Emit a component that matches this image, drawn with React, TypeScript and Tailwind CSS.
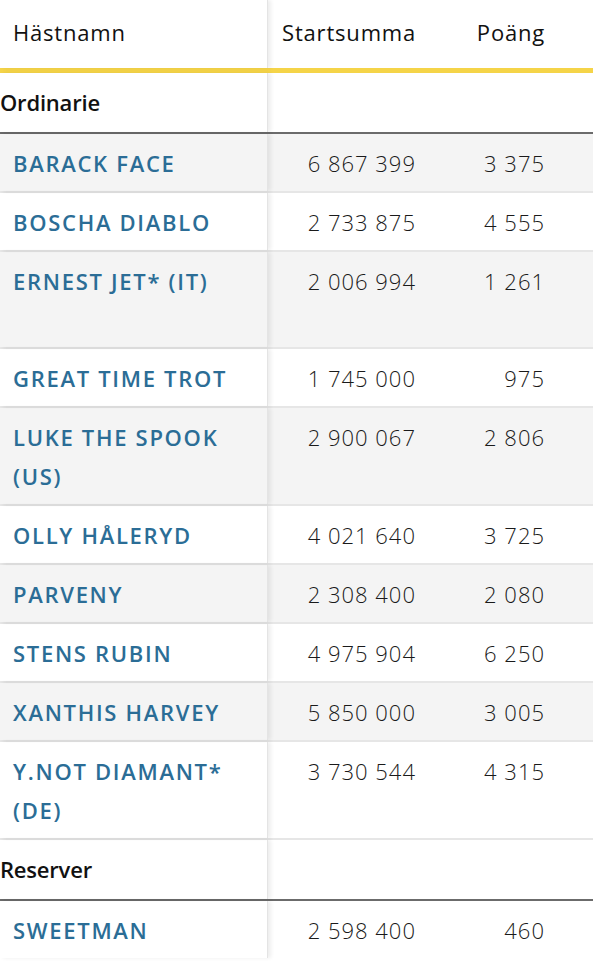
type Horse = { name: string; sum: string; points: string; tall?: boolean };

const ordinarie: Horse[] = [
  { name: "BARACK FACE", sum: "6 867 399", points: "3 375" },
  { name: "BOSCHA DIABLO", sum: "2 733 875", points: "4 555" },
  { name: "ERNEST JET* (IT)", sum: "2 006 994", points: "1 261", tall: true },
  { name: "GREAT TIME TROT", sum: "1 745 000", points: "975" },
  { name: "LUKE THE SPOOK (US)", sum: "2 900 067", points: "2 806" },
  { name: "OLLY HÅLERYD", sum: "4 021 640", points: "3 725" },
  { name: "PARVENY", sum: "2 308 400", points: "2 080" },
  { name: "STENS RUBIN", sum: "4 975 904", points: "6 250" },
  { name: "XANTHIS HARVEY", sum: "5 850 000", points: "3 005" },
  { name: "Y.NOT DIAMANT* (DE)", sum: "3 730 544", points: "4 315" },
];

const reserver: Horse[] = [{ name: "SWEETMAN", sum: "2 598 400", points: "460" }];

const firstCol =
  "w-[268px] shrink-0 border-r border-[#e4e4e4] shadow-[3px_0_4px_rgba(0,0,0,0.07)] relative";

function GroupRow({ label }: { label: string }) {
  return (
    <div className="flex bg-white border-b-2 border-[#6b6b6b]">
      <div className={`${firstCol} h-[59px] flex items-center font-semibold text-[#111] tracking-[-0.2px]`}>
        {label}
      </div>
      <div className="flex-1" />
    </div>
  );
}

function HorseRow({ horse, idx, last }: { horse: Horse; idx: number; last?: boolean }) {
  const bg = idx % 2 === 0 ? "bg-[#f4f4f4]" : "bg-white";
  return (
    <div className={`flex ${bg} ${last ? "" : "border-b-2 border-[#e6e6e6]"}`}>
      <div
        className={`${firstCol} pl-[13px] pr-3 pt-[10px] pb-[8px] font-semibold tracking-[1.7px] text-[#2b6d96] ${
          horse.tall ? "min-h-[95px]" : ""
        }`}
      >
        {horse.name}
      </div>
      <div className="w-[162px] shrink-0 pr-[14px] pt-[10px] text-right font-light tracking-[1px] text-[#1a1a1a]">
        {horse.sum}
      </div>
      <div className="flex-1 pr-[48px] pt-[10px] text-right font-light tracking-[1px] text-[#1a1a1a]">
        {horse.points}
      </div>
    </div>
  );
}

export default function App() {
  return (
    <div
      className="w-[593px] min-h-[975px] bg-white text-[22px] leading-[39px]"
      style={{ fontFamily: '"Open Sans", "Liberation Sans", sans-serif' }}
    >
      {/* Header */}
      <div className="flex border-b-[5px] border-[#f5d448] tracking-[0.8px] text-[#111]">
        <div className={`${firstCol} h-[68px] flex items-center pl-[13px] pb-[3px]`}>Hästnamn</div>
        <div className="w-[162px] shrink-0 h-[68px] flex items-center justify-end pr-[14px] pb-[3px]">
          Startsumma
        </div>
        <div className="flex-1 h-[68px] flex items-center justify-end pr-[48px] pb-[3px]">Poäng</div>
      </div>

      <GroupRow label="Ordinarie" />
      {ordinarie.map((h, i) => (
        <HorseRow key={h.name} horse={h} idx={i} last={i === ordinarie.length - 1} />
      ))}
      <div className="border-t-2 border-[#e6e6e6]" />
      <GroupRow label="Reserver" />
      {reserver.map((h) => (
        <HorseRow key={h.name} horse={h} idx={1} last />
      ))}
    </div>
  );
}
